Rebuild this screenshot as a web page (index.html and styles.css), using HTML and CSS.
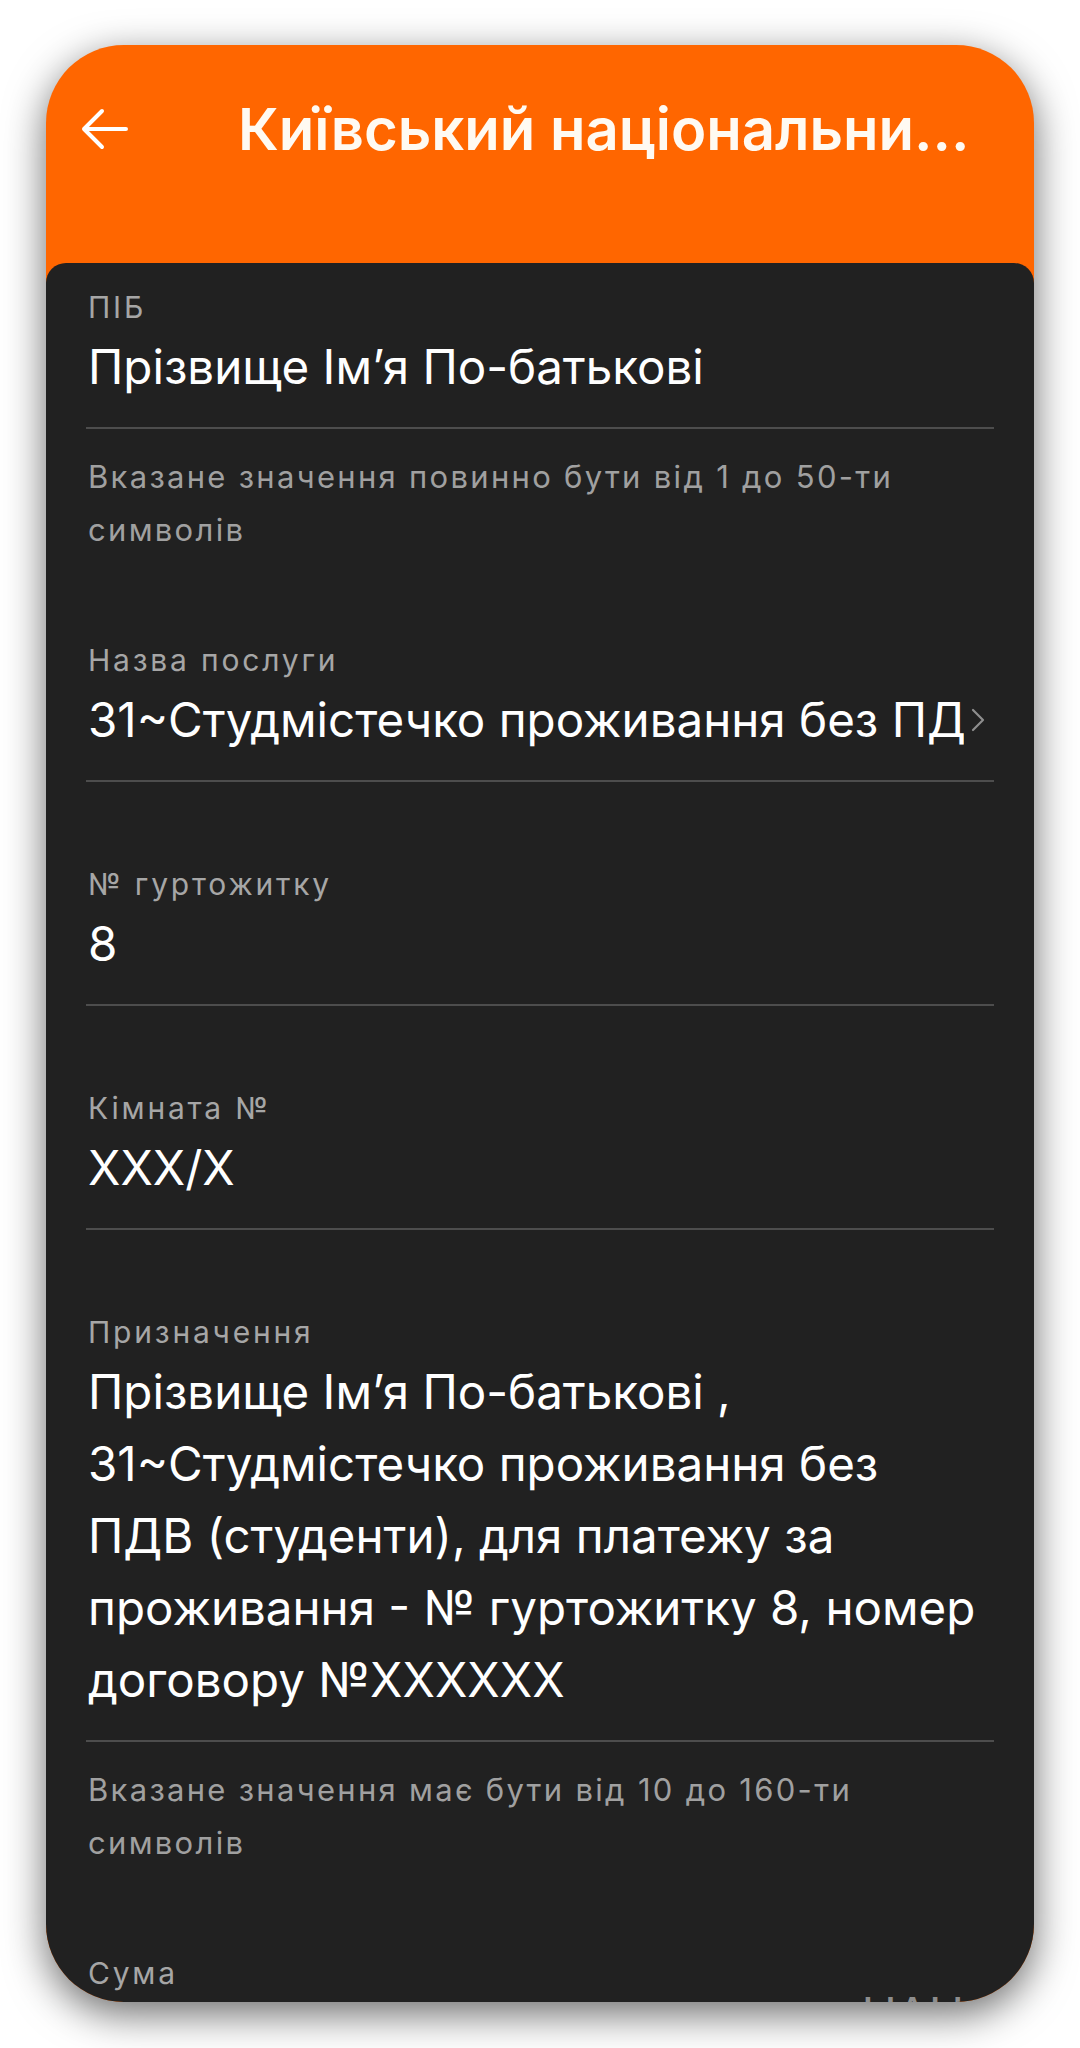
FILE: index.html
```html
<!DOCTYPE html>
<html lang="uk">
<head>
<meta charset="utf-8">
<title>Оплата</title>
<link rel="stylesheet" href="styles.css">
</head>
<body>
<div class="stage">
  <div class="phone">
    <header class="appbar">
      <div class="appbar-row">
        <svg class="back" viewBox="0 0 48 42" width="48" height="42" aria-hidden="true">
          <path d="M46 21 H4 M22 3 L4 21 L22 39" fill="none" stroke="#fff" stroke-width="4" stroke-linecap="round" stroke-linejoin="round"/>
        </svg>
        <h1 class="title">Київський національни...</h1>
      </div>
    </header>
    <main class="card">
      <div class="field field-first">
        <div class="label">ПІБ</div>
        <div class="value">Прізвище Ім’я По-батькові</div>
      </div>
      <div class="hint">Вказане значення повинно бути від 1 до 50-ти символів</div>

      <div class="field field-after-hint">
        <div class="label">Назва послуги</div>
        <div class="value-row">
          <div class="value value-clip">31~Студмістечко проживання без ПДВ (студенти)</div>
          <svg class="chevron" viewBox="0 0 16 24" width="16" height="24" aria-hidden="true">
            <path d="M3 2 L13 12 L3 22" fill="none" stroke="#8e8e8e" stroke-width="2.2" stroke-linecap="round" stroke-linejoin="round"/>
          </svg>
        </div>
      </div>

      <div class="field">
        <div class="label">№ гуртожитку</div>
        <div class="value">8</div>
      </div>

      <div class="field">
        <div class="label">Кімната №</div>
        <div class="value">XXX/X</div>
      </div>

      <div class="field">
        <div class="label">Призначення</div>
        <div class="value">Прізвище Ім’я По-батькові , 31~Студмістечко проживання без ПДВ (студенти), для платежу за проживання - № гуртожитку 8, номер договору №XXXXXX</div>
      </div>
      <div class="hint">Вказане значення має бути від 10 до 160-ти символів</div>

      <div class="field field-after-hint field-last">
        <div class="label">Сума</div>
        <div class="value value-amount">UAH</div>
      </div>
    </main>
  </div>
</div>
</body>
</html>
```

FILE: styles.css
```css
* { box-sizing: border-box; }

html, body {
  margin: 0;
  padding: 0;
  background: #ffffff;
}

body {
  font-family: "Inter", "Noto Sans", "DejaVu Sans", sans-serif;
  width: 1080px;
  height: 2048px;
  overflow: hidden;
}

.stage {
  padding: 45px 46px 0 46px;
}

.phone {
  width: 988px;
  height: 1957px;
  border-radius: 78px;
  overflow: hidden;
  background: #ff6600;
  box-shadow: 0 12px 40px rgba(0, 0, 0, 0.58);
  display: flex;
  flex-direction: column;
}

.appbar {
  height: 218px;
  flex: none;
  padding-top: 44px;
}

.appbar-row {
  height: 80px;
  display: flex;
  align-items: center;
  padding-left: 34px;
  gap: 110px;
}

.back {
  display: block;
  flex: none;
}

.title {
  margin: 0;
  font-size: 58px;
  line-height: 80px;
  font-weight: 600;
  color: #fffaf2;
  white-space: nowrap;
}

.card {
  flex: 1;
  background: #212121;
  border-radius: 20px 20px 0 0;
  padding: 26px 40px 0 40px;
}

.field {
  padding-top: 84px;
  padding-bottom: 24px;
  border-bottom: 2px solid #4d4d4d;
}

.field-first {
  padding-top: 0;
}

.field-after-hint {
  padding-top: 86px;
}

.field-last {
  border-bottom: none;
}

.label {
  font-size: 30px;
  line-height: 36px;
  letter-spacing: 2.8px;
  color: #a6a6a6;
  padding-left: 2px;
}

.value {
  margin-top: 6px;
  font-size: 47.5px;
  line-height: 72px;
  color: #ffffff;
  padding-left: 2px;
}

.value-row {
  display: flex;
  align-items: center;
  margin-top: 6px;
}

.value-row .value {
  margin-top: 0;
}

.value-clip {
  flex: 1;
  min-width: 0;
  white-space: nowrap;
  overflow: hidden;
}

.chevron {
  flex: none;
  display: block;
  margin-left: 6px;
  margin-right: 8px;
}

.value-amount {
  margin-top: -12px;
  text-align: right;
  color: #8e8e8e;
  padding-right: 30px;
}

.hint {
  margin-top: 21px;
  font-size: 31px;
  line-height: 53px;
  letter-spacing: 2.3px;
  color: #a0a0a0;
  padding-left: 2px;
}
```
